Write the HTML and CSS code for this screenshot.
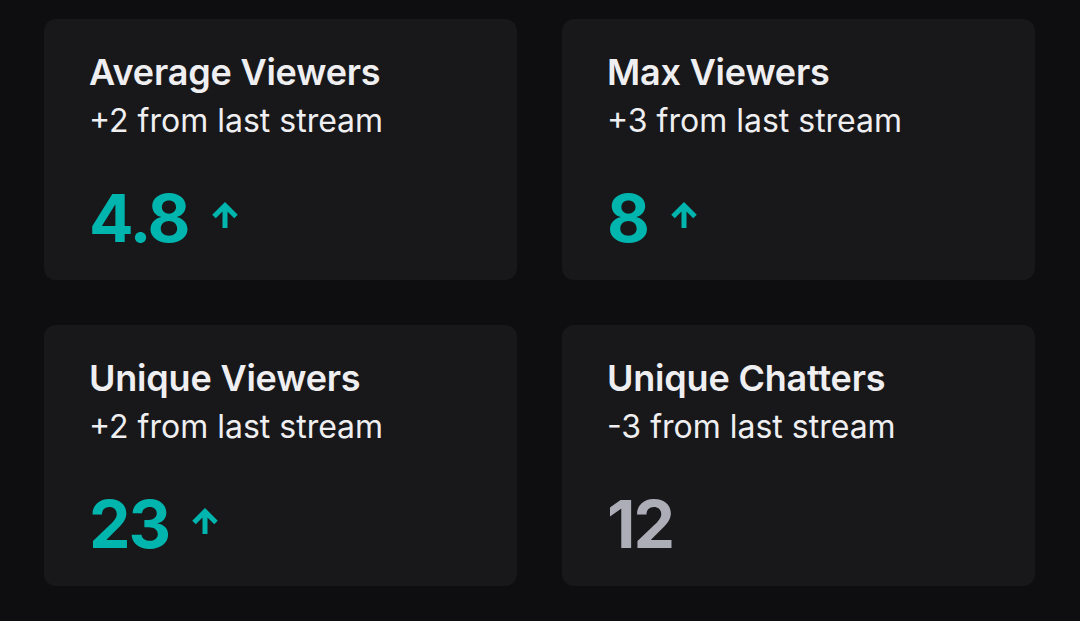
FILE: index.html
```html
<!DOCTYPE html>
<html lang="en">
<head>
<meta charset="utf-8">
<title>Stream Stats</title>
<link rel="stylesheet" href="styles.css">
</head>
<body>
<main class="grid">
  <section class="card">
    <h2 class="title">Average Viewers</h2>
    <p class="sub">+2 from last stream</p>
    <div class="value up">4.8<svg class="arrow" viewBox="0 0 26 26"><path d="M13 26V4M2 14.5L13 3.5L24 14.5" fill="none" stroke="currentColor" stroke-width="5"/></svg></div>
  </section>
  <section class="card">
    <h2 class="title">Max Viewers</h2>
    <p class="sub">+3 from last stream</p>
    <div class="value up">8<svg class="arrow" viewBox="0 0 26 26"><path d="M13 26V4M2 14.5L13 3.5L24 14.5" fill="none" stroke="currentColor" stroke-width="5"/></svg></div>
  </section>
  <section class="card">
    <h2 class="title">Unique Viewers</h2>
    <p class="sub">+2 from last stream</p>
    <div class="value up">23<svg class="arrow" viewBox="0 0 26 26"><path d="M13 26V4M2 14.5L13 3.5L24 14.5" fill="none" stroke="currentColor" stroke-width="5"/></svg></div>
  </section>
  <section class="card">
    <h2 class="title">Unique Chatters</h2>
    <p class="sub">-3 from last stream</p>
    <div class="value flat">12</div>
  </section>
</main>
</body>
</html>
```
FILE: styles.css
```css
html, body {
  margin: 0;
  padding: 0;
  background: #0e0e10;
}
body {
  font-family: Inter, "Noto Sans", sans-serif;
  color: #efeff1;
  padding: 19px 45px 0 44px;
}
.grid {
  display: grid;
  grid-template-columns: 473px 473px;
  grid-auto-rows: 261px;
  column-gap: 45px;
  row-gap: 45px;
}
.card {
  background: #18181b;
  border-radius: 12px;
  padding: 32px 20px 0 45px;
  box-sizing: border-box;
  display: flex;
  flex-direction: column;
}
.title {
  margin: 0;
  font-size: 36px;
  font-weight: 600;
  line-height: 42px;
  letter-spacing: -0.2px;
  color: #efeff1;
}
.sub {
  margin: 8px 0 0;
  font-size: 32px;
  font-weight: 400;
  line-height: 40px;
  color: #efeff1;
}
.value {
  margin-top: 44px;
  font-size: 66px;
  font-weight: 700;
  line-height: 66px;
  letter-spacing: -2px;
  display: flex;
  align-items: center;
}
.value.up { color: #00b5ad; }
.value.flat { color: #adadb8; }
.arrow {
  width: 26px;
  height: 26px;
  margin-left: 23px;
  margin-bottom: 6px;
  overflow: visible;
}
```
